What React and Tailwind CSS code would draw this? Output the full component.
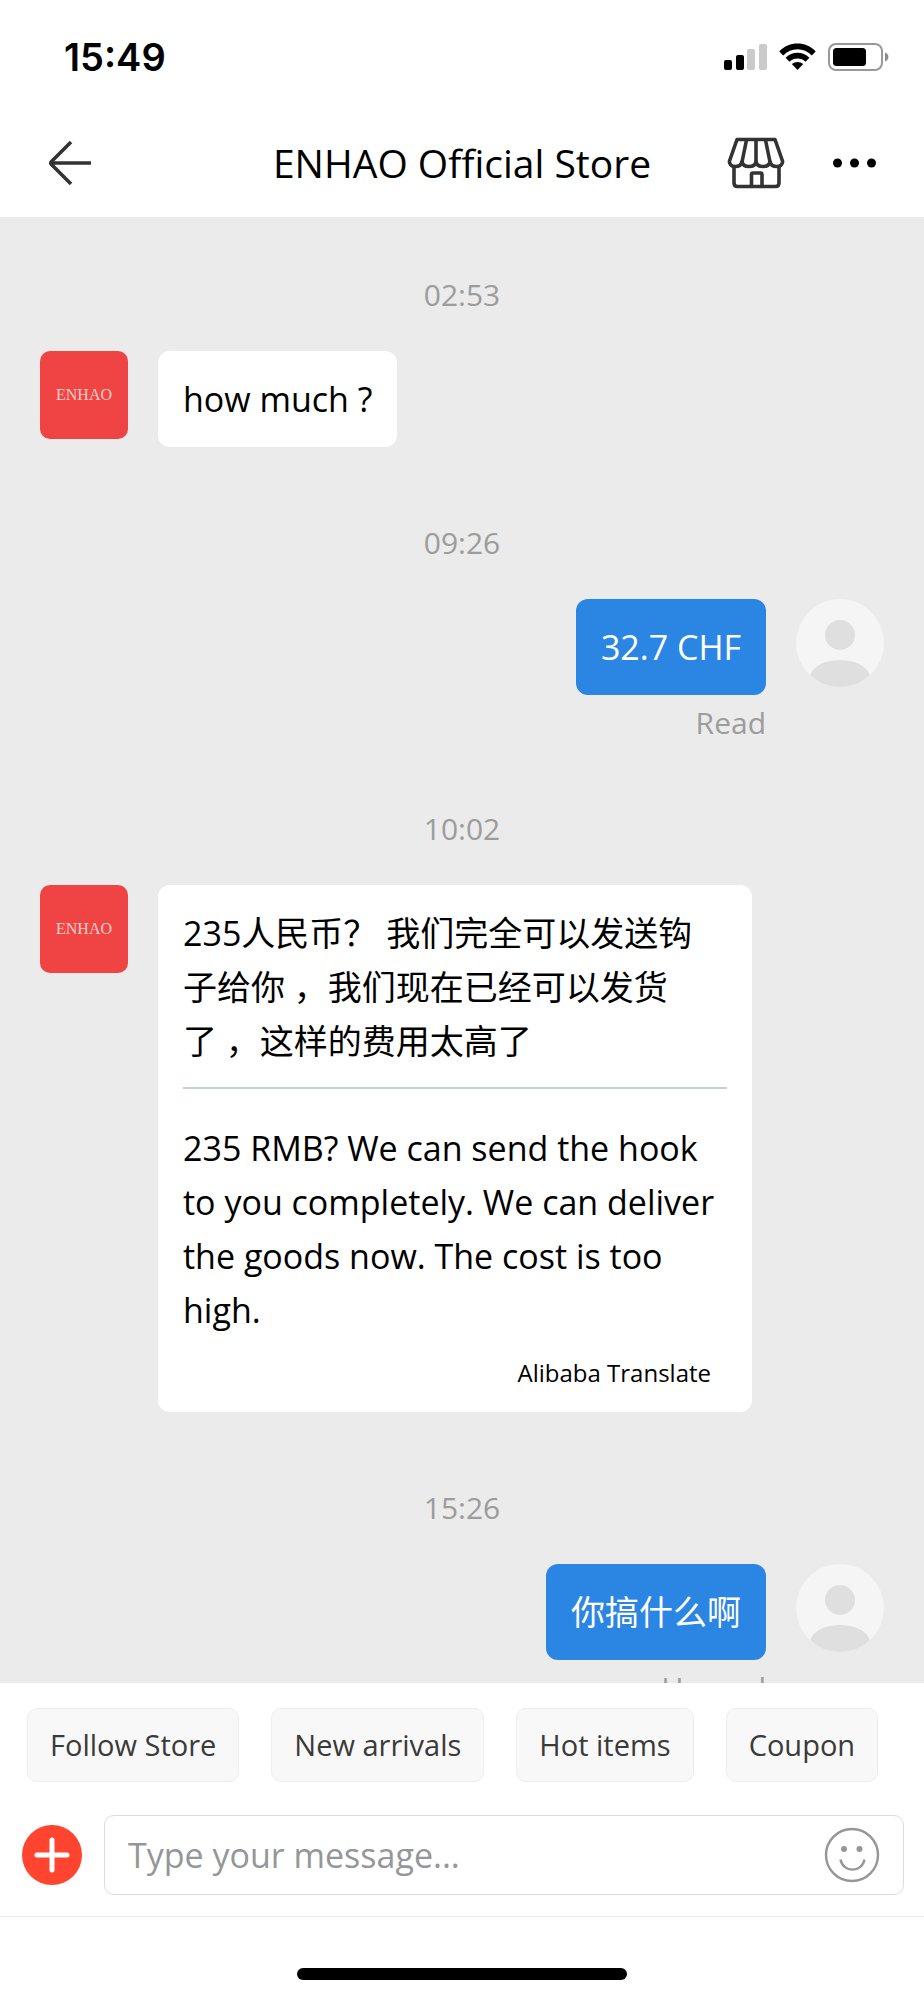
import React, { useState } from 'react';

const conversation = [
  { id: 1, time: '02:53', from: 'store', text: 'how much ?' },
  { id: 2, time: '09:26', from: 'me', text: '32.7 CHF', status: 'Read' },
  {
    id: 3,
    time: '10:02',
    from: 'store',
    text: '235人民币？ 我们完全可以发送钩子给你\u00a0，我们现在已经可以发货了\u00a0，这样的费用太高了',
    translation:
      '235 RMB? We can send the hook to you completely. We can deliver the goods now. The cost is too high.',
  },
  { id: 4, time: '15:26', from: 'me', text: '你搞什么啊', status: 'Unread' },
];

const quickReplies = ['Follow Store', 'New arrivals', 'Hot items', 'Coupon'];

function StatusBar() {
  return (
    <div className="flex h-[114px] items-center justify-between pl-16 pr-[35px]">
      <span className="font-['Inter',sans-serif] text-[38px] font-semibold leading-10">15:49</span>
      <div className="flex items-center gap-3">
        {/* Signal */}
        <svg width="43" height="28" viewBox="0 0 43 28">
          <rect x="0" y="17" width="8" height="10" rx="2" fill="#000" />
          <rect x="12" y="12" width="8" height="15" rx="2" fill="#000" />
          <rect x="23" y="6" width="8" height="21" rx="2" fill="#cbcbcb" />
          <rect x="35" y="1" width="8" height="26" rx="2" fill="#cbcbcb" />
        </svg>
        {/* Wi-Fi */}
        <svg width="37" height="28" viewBox="0 0 37 28">
          <path d="M0.3 8.4C10 -2.2 27 -2.2 36.7 8.4L32.8 12.4C24.8 4.3 12.2 4.3 4.2 12.4Z" fill="#000" />
          <path d="M6.6 14.8C13.3 8.1 23.7 8.1 30.4 14.8L26.5 18.7C21.9 14.3 15.1 14.3 10.5 18.7Z" fill="#000" />
          <path d="M12.8 21.1C16.1 18.2 20.9 18.2 24.2 21.1L18.5 27Z" fill="#000" />
        </svg>
        {/* Battery */}
        <svg width="61" height="28" viewBox="0 0 61 28">
          <rect x="1" y="1" width="53" height="26" rx="7" fill="none" stroke="#999" strokeWidth="2" />
          <rect x="5" y="5" width="33" height="18" rx="3.5" fill="#000" />
          <path d="M57 9.5C61.5 11 61.5 17 57 18.5Z" fill="#8c8c8c" />
        </svg>
      </div>
    </div>
  );
}

function Header({ title }) {
  return (
    <header className="grid h-[103px] grid-cols-[1fr_auto_1fr] items-center px-12 pb-[6px]">
      <button type="button" aria-label="Back" className="justify-self-start">
        <svg width="44" height="46" viewBox="0 0 44 46" fill="none" stroke="#333" strokeWidth="3.6">
          <path d="M23 2L3.5 21.5Q2 23 3.5 24.5L23 44M3 23H43" />
        </svg>
      </button>
      <h1 className="text-[39px] leading-[52px]">{title}</h1>
      <div className="flex items-center gap-12 justify-self-end">
        <button type="button" aria-label="Visit store">
          <svg width="58" height="52" viewBox="0 0 58 52" fill="none" stroke="#333" strokeWidth="3.6" strokeLinejoin="round">
            <path d="M10 2.5H48L55.5 24C56 27.5 53 29.5 50 29.5C46 29.5 43.500 28 43 24.500C42.500 28 39.500 29.500 36 29.500C32.500 29.500 29.500 28 29 24.500C28.500 28 25.500 29.500 22 29.500C18.500 29.500 15.500 28 15 24.500C14.500 28 12 29.500 8 29.500C5 29.5 2 27.5 2.5 24Z" />
            <path d="M19.500 3L15 25M29 3V25M38.500 3L43 25" />
            <path d="M7 30V46Q7 49.500 10.500 49.500H48.500Q52 49.500 52 46V30" />
            <path d="M24.500 49V37.500Q24.500 36 26 36H33.500Q35 36 35 37.500V49" />
          </svg>
        </button>
        <button type="button" aria-label="More options">
          <svg width="43" height="10" viewBox="0 0 43 10">
            <circle cx="4.5" cy="5" r="4.5" />
            <circle cx="21.5" cy="5" r="4.5" />
            <circle cx="38.5" cy="5" r="4.5" />
          </svg>
        </button>
      </div>
    </header>
  );
}

function StoreAvatar() {
  return (
    <div className="flex size-[88px] shrink-0 items-center justify-center rounded-[10px] bg-[#f04444] font-['Liberation_Serif',serif] text-base text-[#fbd0c8]">
      ENHAO
    </div>
  );
}

function UserAvatar() {
  return (
    <svg className="size-[88px] shrink-0 rounded-full bg-[#f5f5f5]" viewBox="0 0 88 88" fill="#dfdfdf">
      <circle cx="44" cy="36" r="15" />
      <path d="M14 76C18 66 30 61 44 61C58 61 70 66 74 76L66 88H22Z" />
    </svg>
  );
}

function Message({ message }) {
  const mine = message.from === 'me';

  return (
    <li>
      <time className="mb-9 block text-center text-[30px] leading-10 text-[#9c9c9c]">{message.time}</time>
      {mine ? (
        <div className="flex justify-end gap-[30px]">
          <div>
            <p className="rounded-[12px] bg-[#2b86e3] px-[25px] py-[21px] text-[34px] leading-[54px] text-white">
              {message.text}
            </p>
            <p className="mt-2 text-right text-[30px] leading-10 text-[#9c9c9c]">{message.status}</p>
          </div>
          <UserAvatar />
        </div>
      ) : (
        <div className="flex gap-[30px] pb-[10px]">
          <StoreAvatar />
          <div className="max-w-[594px] rounded-[12px] bg-white px-[25px] py-[21px] text-[34px] leading-[54px]">
            {message.translation ? (
              <>
                <p className="pr-4">{message.text}</p>
                <hr className="mb-8 mt-[19px] border-t-2 border-[#c3d2d3]" />
                <p>{message.translation}</p>
                <p className="mt-[18px] pr-4 text-right text-[24px] leading-9">Alibaba Translate</p>
              </>
            ) : (
              <p>{message.text}</p>
            )}
          </div>
        </div>
      )}
    </li>
  );
}

function Composer() {
  const [draft, setDraft] = useState('');

  return (
    <footer className="bg-white pt-[25px]">
      <div className="flex gap-8 pl-[27px]">
        {quickReplies.map((label) => (
          <button
            key={label}
            type="button"
            className="whitespace-nowrap rounded-[10px] border border-[#eeeeee] bg-[#f8f8f8] px-[22px] py-4 text-[29px] leading-10 text-[#3a3a3a]"
          >
            {label}
          </button>
        ))}
      </div>

      <div className="flex items-center gap-[22px] border-b border-[#ececec] pb-[21px] pl-[22px] pr-5 pt-[33px]">
        <button
          type="button"
          aria-label="Add attachment"
          className="flex size-[60px] shrink-0 items-center justify-center rounded-full bg-[#ff452f]"
        >
          <svg width="36" height="36" viewBox="0 0 36 36" fill="none" stroke="#fff" strokeWidth="5" strokeLinecap="round">
            <path d="M18 3V33M3 18H33" />
          </svg>
        </button>
        <div className="flex h-20 flex-1 items-center rounded-[10px] border border-[#dcdcdc] px-[23px]">
          <input
            type="text"
            aria-label="Message"
            placeholder="Type your message..."
            value={draft}
            onChange={(e) => setDraft(e.target.value)}
            className="min-w-0 flex-1 bg-transparent text-[34px] leading-[54px] outline-none placeholder:text-[#949799]"
          />
          <button type="button" aria-label="Emoji">
            <svg width="56" height="56" viewBox="0 0 56 56" fill="none" stroke="#969696" strokeWidth="2.4">
              <circle cx="28" cy="28" r="26" />
              <circle cx="20" cy="22" r="3" fill="#969696" stroke="none" />
              <circle cx="35.5" cy="22" r="3" fill="#969696" stroke="none" />
              <path d="M16.5 32.5C19 46 38 46 40.5 32.5" />
            </svg>
          </button>
        </div>
      </div>

      {/* Home indicator */}
      <div className="flex justify-center pb-5 pt-[51px]">
        <div className="h-3 w-[330px] rounded-full bg-black"></div>
      </div>
    </footer>
  );
}

function App() {
  return (
    <div className="flex h-screen flex-col bg-white font-['Open_Sans','Noto_Sans_CJK_SC',sans-serif] text-black">
      <StatusBar />
      <Header title="ENHAO Official Store" />
      <main className="min-h-0 flex-1 overflow-y-auto bg-[#ebebeb] px-10 pt-[58px] [scrollbar-width:none]">
        <ul lang="zh-CN" className="flex flex-col gap-[66px]">
          {conversation.map((message) => (
            <Message key={message.id} message={message} />
          ))}
        </ul>
      </main>
      <Composer />
    </div>
  );
}

export default App;
